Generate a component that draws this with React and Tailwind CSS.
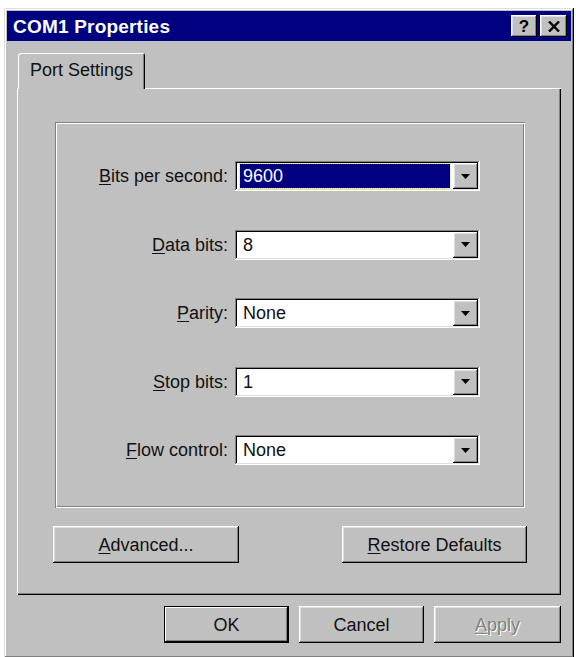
import React from 'react';

const raised =
  'shadow-[inset_-1px_-1px_0_#000,inset_1px_1px_0_#fff,inset_-2px_-2px_0_#808080,inset_2px_2px_0_#dfdfdf]';
const sunken =
  'shadow-[inset_-1px_-1px_0_#fff,inset_1px_1px_0_#808080,inset_-2px_-2px_0_#dfdfdf,inset_2px_2px_0_#000]';

function Combo({ value, selected }) {
  return (
    <div className={`flex h-[30px] w-[245px] items-stretch bg-white p-[2px] ${sunken}`}>
      <div className="flex flex-1 items-center px-[3px]">
        {selected ? (
          <div className="flex h-[24px] w-full items-center bg-[#000080] px-[3px] text-white outline-1 outline-dotted outline-[#d8d890]">
            {value}
          </div>
        ) : (
          <span className="px-[3px]">{value}</span>
        )}
      </div>
      <div className={`flex w-[25px] items-center justify-center bg-[#c0c0c0] ${raised}`}>
        <svg width="9" height="5" viewBox="0 0 9 5">
          <path d="M0 0h9L4.5 5z" fill="#000" />
        </svg>
      </div>
    </div>
  );
}

function Row({ label, hot, value, selected }) {
  const rest = label.slice(hot.length);
  return (
    <div className="flex h-[30px] items-center">
      <div className="w-[180px] pr-[7px] text-right">
        <u className="underline-offset-2">{hot}</u>
        {rest}
      </div>
      <Combo value={value} selected={selected} />
    </div>
  );
}

function Button({ children, className = '', isDefault }) {
  return (
    <div
      className={`flex h-[37px] items-center justify-center bg-[#c0c0c0] ${
        isDefault
          ? 'shadow-[inset_0_0_0_1px_#000,inset_-2px_-2px_0_#000,inset_2px_2px_0_#fff,inset_-3px_-3px_0_#808080]'
          : raised
      } ${className}`}
    >
      {children}
    </div>
  );
}

const rows = [
  { label: 'Bits per second:', hot: 'B', value: '9600', selected: true },
  { label: 'Data bits:', hot: 'D', value: '8' },
  { label: 'Parity:', hot: 'P', value: 'None' },
  { label: 'Stop bits:', hot: 'S', value: '1' },
  { label: 'Flow control:', hot: 'F', value: 'None' },
];

export default function App() {
  return (
    <div
      className="h-[657px] w-[576px] overflow-hidden bg-white pl-[4px] pt-[8px] text-[18px] leading-none text-[#111]"
      style={{ fontFamily: '"Liberation Sans", Arial, sans-serif' }}
    >
      <div
        className={`w-[570px] bg-[#c0c0c0] p-[3px] shadow-[inset_-1px_-1px_0_#000,inset_1px_1px_0_#dfdfdf,inset_-2px_-2px_0_#808080,inset_2px_2px_0_#fff]`}
      >
        {/* title bar */}
        <div className="flex h-[30px] items-center bg-[#000080] pl-[6px] pr-[4px]">
          <span className="flex-1 text-[19px] font-bold tracking-[0.2px] text-white">COM1 Properties</span>
          <div className="flex gap-[3px]">
            <div className={`flex h-[22px] w-[26px] items-center justify-center bg-[#c0c0c0] text-[17px] font-bold text-black ${raised}`}>
              ?
            </div>
            <div className={`flex h-[22px] w-[27px] items-center justify-center bg-[#c0c0c0] ${raised}`}>
              <svg width="12" height="11" viewBox="0 0 12 11">
                <path d="M1 0.5l10 10M11 0.5l-10 10" stroke="#000" strokeWidth="2.4" />
              </svg>
            </div>
          </div>
        </div>

        <div className="px-[10px] pb-[12px] pt-[12px]">
          {/* tab */}
          <div className="relative z-10 -mb-[1px] flex">
            <div className="ml-[1px] flex h-[36px] w-[127px] items-center justify-center rounded-tl-[3px] rounded-tr-[2px] bg-[#c0c0c0] pb-[2px] shadow-[inset_1px_1px_0_#fff,inset_-1px_0_0_#000,inset_-2px_0_0_#808080]">
              Port Settings
            </div>
          </div>

          {/* tab page */}
          <div className="bg-[#c0c0c0] pb-[32px] pl-[36px] pr-[34px] pt-[34px] shadow-[inset_1px_1px_0_#fff,inset_-1px_-1px_0_#000,inset_-2px_-2px_0_#808080]">
            <div className="mx-[2px] flex h-[386px] flex-col gap-[38.5px] pt-[39px] shadow-[inset_1px_1px_0_#808080,inset_-1px_-1px_0_#fff,inset_2px_2px_0_#fff,inset_-2px_-2px_0_#808080]">
              {rows.map((r) => (
                <Row key={r.label} {...r} />
              ))}
            </div>
            <div className="mt-[18px] flex justify-between">
              <Button className="w-[186px]">
                <span>
                  <u className="underline-offset-2">A</u>dvanced...
                </span>
              </Button>
              <Button className="w-[185px]">
                <span>
                  <u className="underline-offset-2">R</u>estore Defaults
                </span>
              </Button>
            </div>
          </div>

          {/* dialog buttons */}
          <div className="mt-[11px] flex justify-end gap-[10px]">
            <Button className="w-[125px]" isDefault>
              OK
            </Button>
            <Button className="w-[125px]">Cancel</Button>
            <Button className="w-[127px]">
              <span className="text-[#808080] [text-shadow:1px_1px_0_#fff]">
                <u className="underline-offset-2">A</u>pply
              </span>
            </Button>
          </div>
        </div>
      </div>
    </div>
  );
}
